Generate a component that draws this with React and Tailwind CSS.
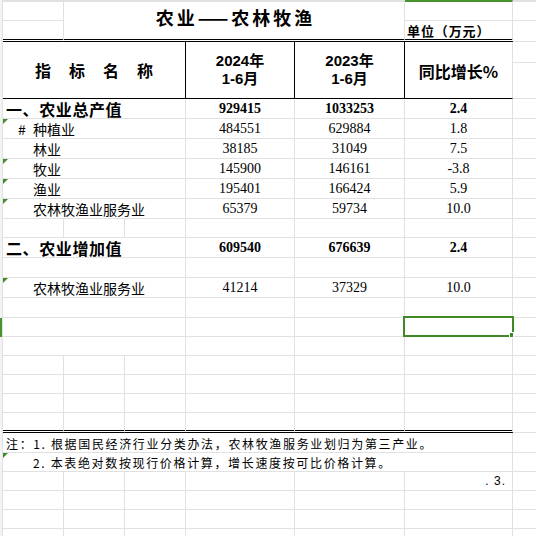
import React from "react";

const CJK = "font-['Noto_Sans_CJK_SC',sans-serif]";

function Tri() {
  return (
    <div className="absolute left-0 top-0 w-0 h-0 border-t-[5px] border-t-[#3f8a2a] border-r-[5px] border-r-transparent" />
  );
}

function Gutter({ green }) {
  return green ? (
    <div className="w-[3px] shrink-0 border-r border-[#e1e1e1] bg-[#4a9331]" />
  ) : (
    <div className="w-[3px] shrink-0 border-r border-[#e1e1e1] bg-[#f3f3f3]" />
  );
}

function Num({ w, children, bold }) {
  return (
    <div
      className={
        w +
        " shrink-0 border-r border-b border-[#e1e1e1] flex items-center justify-center pt-[1px] leading-[16px] font-['Liberation_Serif',serif] text-[14px] text-black " +
        (bold ? "font-bold" : "")
      }
    >
      {children}
    </div>
  );
}

function Split() {
  return (
    <>
      <div className="w-[61px] shrink-0 border-r border-b border-[#e1e1e1]" />
      <div className="w-[61px] shrink-0 border-r border-b border-[#e1e1e1]" />
      <div className="w-[61px] shrink-0 border-r border-b border-[#e1e1e1]" />
    </>
  );
}

function Label({ children, tri, bold, hash }) {
  return (
    <div
      className={
        "relative w-[183px] shrink-0 border-r border-b border-[#e1e1e1] flex items-center pt-[1px] leading-[17px] text-black " +
        CJK +
        (bold
          ? " font-bold text-[16px] tracking-[0.6px] pl-[3px]"
          : hash
          ? " text-[14px] pl-[15px]"
          : " text-[14px] pl-[30px]")
      }
    >
      {tri && <Tri />}
      {hash && <span className="w-[12px] mr-[3px] shrink-0 text-[14px]">#</span>}
      {children ? <span>{children}</span> : null}
    </div>
  );
}

function Tail() {
  return <div className="w-[23px] shrink-0 border-b border-[#e1e1e1]" />;
}

function DataRow({ h, label, tri, bold, d, e, f, hash, split }) {
  return (
    <div className={"flex " + h}>
      <Gutter />
      {split ? (
        <Split />
      ) : (
        <Label tri={tri} bold={bold} hash={hash}>
          {label}
        </Label>
      )}
      <Num w="w-[109px]" bold={bold}>{d}</Num>
      <Num w="w-[110px]" bold={bold}>{e}</Num>
      <Num w="w-[108px]" bold={bold}>{f}</Num>
      <Tail />
    </div>
  );
}

export default function App() {
  return (
    <div className="relative w-[536px] h-[536px] overflow-hidden bg-white">
      {/* Title block */}
      <div className="grid grid-cols-[3px_61px_341px_108px_23px] grid-rows-[21px_21px]">
        <div className="row-span-2 border-r border-[#e1e1e1] bg-[#f3f3f3]" />
        <div className="border-t-2 border-b border-r border-[#e1e1e1]" />
        <div
          className={
            "row-span-2 border-t-2 border-t-[#e1e1e1] border-r border-r-[#e1e1e1] border-b-[3px] border-b-black border-double flex items-center justify-center pb-[7px] pl-[3px] leading-[20px] font-bold text-[18px] tracking-[3px] text-black " +
            CJK
          }
        >
          农业——农林牧渔
        </div>
        <div className="border-t-2 border-t-[#4a9331] border-b border-r border-b-[#e1e1e1] border-r-[#e1e1e1]" />
        <div className="border-t-2 border-b border-[#e1e1e1]" />
        <div className="border-r border-r-[#e1e1e1] border-b-[3px] border-b-black border-double" />
        <div
          className={
            "border-r border-r-[#e1e1e1] border-b-[3px] border-b-black border-double flex items-center pl-[2px] pt-[1px] leading-[15px] font-bold text-[13px] tracking-[0.9px] text-black " +
            CJK
          }
        >
          单位（万元）
        </div>
        <div className="border-b border-[#e1e1e1]" />
      </div>

      {/* Header row */}
      <div className="flex h-[57px]">
        <Gutter />
        <div
          className={
            "w-[183px] shrink-0 border-r border-b border-black flex items-center justify-center gap-[18px] font-bold text-[16px] text-black " +
            CJK
          }
        >
          <span>指</span>
          <span>标</span>
          <span>名</span>
          <span>称</span>
        </div>
        <div className="w-[109px] shrink-0 border-r border-b border-black flex flex-col items-center justify-center leading-[18px] font-bold text-[15px] text-black font-['Liberation_Sans','Noto_Sans_CJK_SC',sans-serif]">
          <span>2024年</span>
          <span>1-6月</span>
        </div>
        <div className="w-[110px] shrink-0 border-r border-b border-black flex flex-col items-center justify-center leading-[18px] font-bold text-[15px] text-black font-['Liberation_Sans','Noto_Sans_CJK_SC',sans-serif]">
          <span>2023年</span>
          <span>1-6月</span>
        </div>
        <div
          className={
            "w-[108px] shrink-0 border-r border-r-[#e1e1e1] border-b border-b-black flex items-center justify-center pt-[2px] font-bold text-[16px] text-black " +
            CJK
          }
        >
          同比增长%
        </div>
        <div className="w-[23px] shrink-0 flex flex-col">
          <div className="h-[21px] border-b border-[#e1e1e1]" />
          <div className="h-[36px] border-b border-[#e1e1e1]" />
        </div>
      </div>

      <DataRow h="h-[20px]" label="一、农业总产值" bold d="929415" e="1033253" f="2.4" />
      <DataRow h="h-[20px]" label="种植业" hash tri d="484551" e="629884" f="1.8" />
      <DataRow h="h-[20px]" label="林业" d="38185" e="31049" f="7.5" />
      <DataRow h="h-[20px]" label="牧业" tri d="145900" e="146161" f="-3.8" />
      <DataRow h="h-[20px]" label="渔业" tri d="195401" e="166424" f="5.9" />
      <DataRow h="h-[20px]" label="农林牧渔业服务业" tri d="65379" e="59734" f="10.0" />
      <DataRow h="h-[19px]" split />
      <DataRow h="h-[20px]" label="二、农业增加值" bold d="609540" e="676639" f="2.4" />
      <DataRow h="h-[20px]" label="" />
      <DataRow h="h-[20px]" label="农林牧渔业服务业" tri d="41214" e="37329" f="10.0" />
      <DataRow h="h-[20px]" label="" />
      {/* selected row */}
      <div className="flex h-[19px]">
        <Gutter green />
        <Label />
        <Num w="w-[109px]" />
        <Num w="w-[110px]" />
        <Num w="w-[108px]" />
        <Tail />
      </div>
      <DataRow h="h-[19px]" label="" />
      <DataRow h="h-[19px]" split />
      <DataRow h="h-[19px]" split />
      <DataRow h="h-[19px]" split />
      {/* row with double bottom */}
      <div className="flex h-[20px]">
        <Gutter />
        <div className="w-[61px] shrink-0 border-r border-r-[#e1e1e1] border-b-[3px] border-b-black border-double" />
        <div className="w-[61px] shrink-0 border-r border-r-[#e1e1e1] border-b-[3px] border-b-black border-double" />
        <div className="w-[61px] shrink-0 border-r border-r-[#e1e1e1] border-b-[3px] border-b-black border-double" />
        <div className="w-[109px] shrink-0 border-r border-r-[#e1e1e1] border-b-[3px] border-b-black border-double" />
        <div className="w-[110px] shrink-0 border-r border-r-[#e1e1e1] border-b-[3px] border-b-black border-double" />
        <div className="w-[108px] shrink-0 border-r border-r-[#e1e1e1] border-b-[3px] border-b-black border-double" />
        <Tail />
      </div>
      {/* notes */}
      <div className="flex h-[20px]">
        <Gutter />
        <div
          className={
            "w-[510px] shrink-0 border-r border-b border-[#e1e1e1] flex items-center pl-[3px] pt-[1px] leading-[15px] text-[12px] tracking-[1.65px] whitespace-nowrap text-black " +
            CJK
          }
        >
          注：1. 根据国民经济行业分类办法，农林牧渔服务业划归为第三产业。
        </div>
        <Tail />
      </div>
      <div className="flex h-[19px]">
        <Gutter />
        <div
          className={
            "relative w-[510px] shrink-0 border-r border-b border-[#e1e1e1] flex items-center pl-[30px] pt-[1px] leading-[15px] text-[12px] tracking-[1.65px] whitespace-nowrap text-black " +
            CJK
          }
        >
          <Tri />
          <span>2. 本表绝对数按现行价格计算，增长速度按可比价格计算。</span>
        </div>
        <Tail />
      </div>
      <div className="flex h-[19px]">
        <Gutter />
        <Split />
        <div className="w-[109px] shrink-0 border-r border-b border-[#e1e1e1]" />
        <div className="w-[110px] shrink-0 border-r border-b border-[#e1e1e1]" />
        <div className="w-[108px] shrink-0 border-r border-b border-[#e1e1e1] flex items-center justify-end pr-[6px] pt-[1px] leading-[15px] text-[12px] tracking-[1px] text-black font-['Liberation_Sans',sans-serif]">
          . 3.
        </div>
        <Tail />
      </div>
      <DataRow h="h-[19px]" split />
      <DataRow h="h-[19px]" split />
      <DataRow h="h-[19px]" split />

      {/* selection box */}
      <div className="absolute left-[403px] top-[316px] w-[111px] h-[21px] border-2 border-[#3f8a26]" />
      <div className="absolute left-[509px] top-[332px] w-[5px] h-[6px] bg-[#3f8a26] border border-white" />
    </div>
  );
}
